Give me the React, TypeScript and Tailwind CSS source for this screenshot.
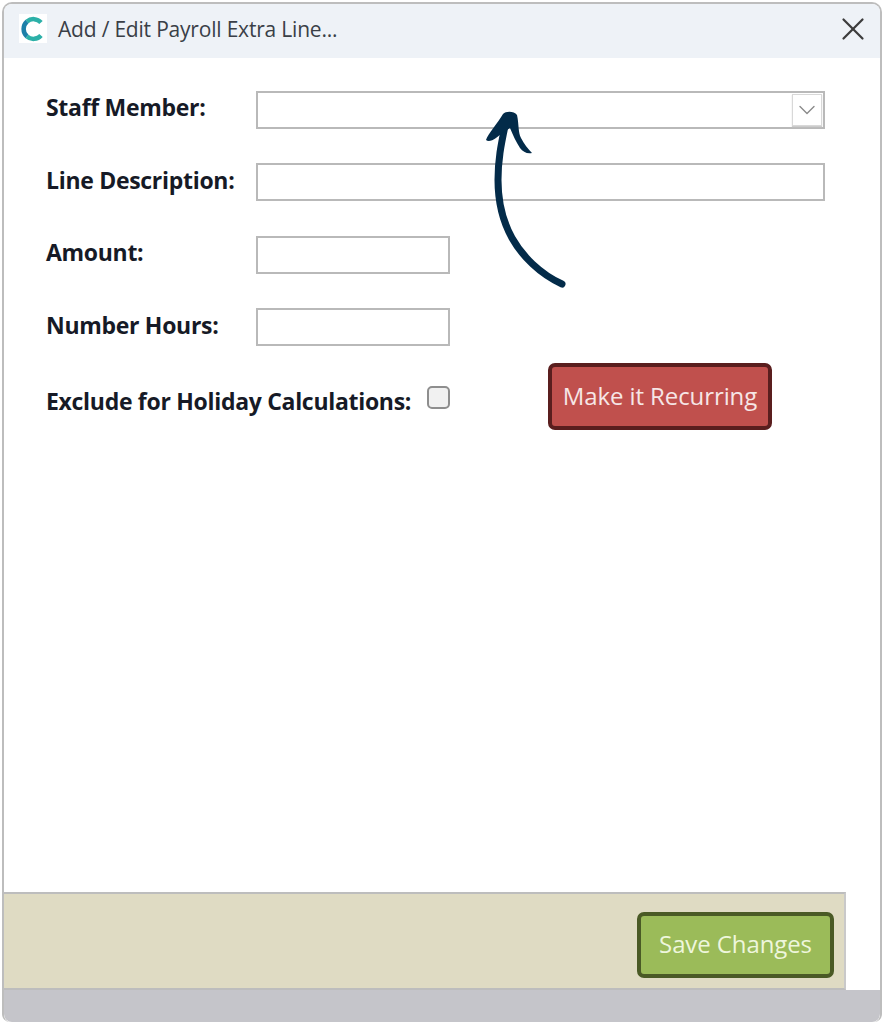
import { X, ChevronDown } from 'lucide-react';

const labelClass = "text-[23px] leading-[30px] font-bold text-[#161a26] [font-family:'Open_Sans',sans-serif] tracking-[-0.3px]";
const inputClass = 'h-[38px] border-2 border-[#b9b9b9] bg-white';
const buttonClass = "flex items-center justify-center rounded-[7px] border-[4px] pb-[2px] text-[24px] tracking-[-0.1px] [font-family:'Open_Sans',sans-serif]";

function Logo() {
  return (
    <div className="-mt-[5px] flex h-[29px] w-[28px] items-center justify-center bg-white">
      <svg width="24" height="26" viewBox="0 0 24 26" fill="none">
        <path d="M20 6.5 A10 10 0 0 0 6 5.5" stroke="#2cb0a8" strokeWidth="4.5" />
        <path d="M6 5.5 A10 10 0 0 0 6 20.5" stroke="#1c7fa8" strokeWidth="4.5" />
        <path d="M6 20.5 A10 10 0 0 0 20 19.5" stroke="#2cb0a8" strokeWidth="4.5" />
      </svg>
    </div>
  );
}

function Arrow() {
  return (
    <svg className="absolute left-0 top-0" width="885" height="320" viewBox="0 0 885 320" fill="none">
      <path d="M562 284 C540 274 522 256 512 238 C502 220 498 200 498 180 C498 160 501 145 505 126" stroke="#032b49" strokeWidth="7" strokeLinecap="round" />
      <path d="M486 140 C488 134 497 124 503 114 C506 111 514 111 517 115 C519 124 518 132 521 138 C524 144 528 149 532 153 C527 154 523 152 520 148 C516 142 513 135 510 128 C505 131 500 135 496 138 C492 141 488 142 486 140 Z" fill="#032b49" />
    </svg>
  );
}

export default function App() {
  return (
    <div className="relative h-[1024px] w-[885px] overflow-hidden bg-white p-[2px_3px_2px_2px]">
      <div className="flex h-[1020px] flex-col overflow-hidden rounded-t-[10px] rounded-b-[8px] border-2 border-b-0 border-[#bdbdbd] bg-white">
        {/* Title bar */}
        <div className="flex h-[54px] shrink-0 items-center bg-[#eef2f7] pl-[15px] pr-[8px]">
          <Logo />
          <span className="ml-[11px] -mt-[2px] text-[21px] text-[#3a3f47] [font-family:'Open_Sans',sans-serif] tracking-[-0.2px]">
            Add / Edit Payroll Extra Line...
          </span>
          <X className="ml-auto -mt-[5px] text-[#3c3c3c]" size={38} strokeWidth={1.4} />
        </div>

        {/* Form */}
        <div className="flex flex-1 flex-col pl-[42px] pt-[33px]">
          <div className="flex items-start">
            <label className={`${labelClass} w-[210px] pt-[1px]`}>Staff Member:</label>
            <div className={`${inputClass} flex w-[569px] justify-end p-[1px]`}>
              <div className="flex w-[30px] items-center justify-center border border-[#d8d8d8] bg-white shadow-[0_1px_1px_#ccc]">
                <ChevronDown className="shrink-0 text-[#8a8a8a]" size={28} strokeWidth={1.2} />
              </div>
            </div>
          </div>
          <div className="mt-[34px] flex items-start">
            <label className={`${labelClass} w-[210px] pt-[2px]`}>Line Description:</label>
            <div className={`${inputClass} w-[569px]`} />
          </div>
          <div className="mt-[35px] flex items-start">
            <label className={`${labelClass} w-[210px] pt-[1px]`}>Amount:</label>
            <div className={`${inputClass} w-[194px]`} />
          </div>
          <div className="mt-[34px] flex items-start">
            <label className={`${labelClass} w-[210px] pt-[2px]`}>Number Hours:</label>
            <div className={`${inputClass} w-[194px]`} />
          </div>
          <div className="mt-[17px] flex items-start">
            <label className={`${labelClass} mt-[23px] w-[381px] whitespace-nowrap`}>Exclude for Holiday Calculations:</label>
            <div className="mt-[23px] h-[23px] w-[23px] rounded-[5px] border-2 border-[#8e8e8e] bg-[#f1f1f1]" />
            <button className={`${buttonClass} ml-[98px] h-[67px] w-[224px] border-[#5a1e1e] bg-[#c0504d] text-[#f6e6e6]`}>
              Make it Recurring
            </button>
          </div>
        </div>

        {/* Footer */}
        <div className="flex h-[98px] w-[842px] shrink-0 items-start justify-end border-t-2 border-r-2 border-b-2 border-[#bdbdbd] border-r-[#c9c9c9] bg-[#dfdbc3] pr-[10px] pt-[18px]">
          <button className={`${buttonClass} h-[66px] w-[197px] border-[#4a5a25] bg-[#9bbb59] text-[#eef6dc]`}>
            Save Changes
          </button>
        </div>
        <div className="h-[32px] shrink-0 rounded-b-[8px] bg-[#c5c5ca]" />
      </div>
      <Arrow />
    </div>
  );
}
